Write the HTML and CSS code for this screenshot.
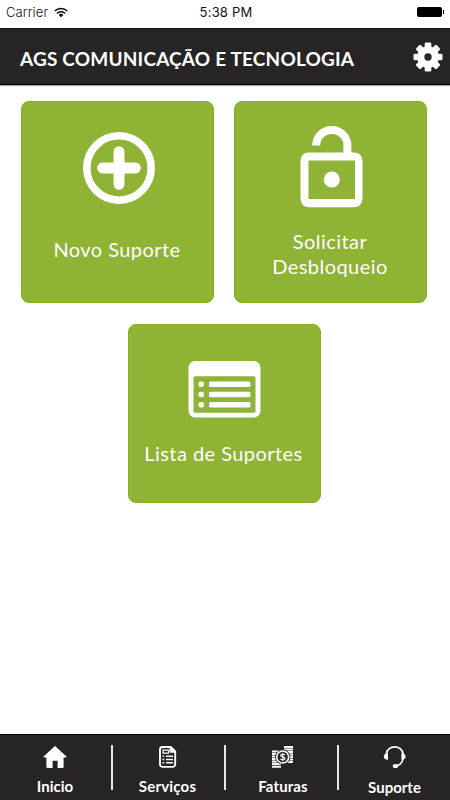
FILE: index.html
```html
<!DOCTYPE html>
<html lang="pt-BR">
<head>
    <meta charset="UTF-8">
    <meta name="viewport" content="width=device-width, initial-scale=1.0">
    <title>AGS Comunicação e Tecnologia</title>
    <link rel="stylesheet" href="styles.css">
</head>
<body>

    <!-- Status bar -->
    <div class="status">
        <div class="carrier">
            <span>Carrier</span>
            <svg width="14" height="11" viewBox="0 0 14 11" fill="none" stroke="#000" stroke-width="1.5">
                <path d="M0.8 4a8.7 8.7 0 0 1 12.4 0M3 6.4a5.6 5.6 0 0 1 8 0"/>
                <path d="M4.7 7.9a3.3 3.3 0 0 1 4.6 0L7 10.3z" fill="#000" stroke="none"/>
            </svg>
        </div>
        <span class="clock">5:38 PM</span>
        <div class="battery"></div>
    </div>

    <header class="header">
        <h1>AGS COMUNICAÇÃO E TECNOLOGIA</h1>
        <svg class="gear" width="30" height="30" viewBox="-15 -15 30 30" fill="#fff">
            <g id="teeth">
                <rect x="-3.3" y="-14.5" width="6.6" height="29" rx="1.3"/>
                <rect x="-14.5" y="-3.3" width="29" height="6.6" rx="1.3"/>
            </g>
            <use href="#teeth" transform="rotate(45)"/>
            <circle r="10.8"/>
            <circle r="3.7" fill="#262424"/>
        </svg>
    </header>

    <main class="cards">
        <div class="card">
            <svg class="icon-plus" width="72" height="72" viewBox="0 0 72 72" fill="none" stroke="#fff">
                <circle cx="36" cy="36" r="32.2" stroke-width="7.5"/>
                <path d="M36 19.7v32.6M19.7 36h32.6" stroke-width="11" stroke-linecap="round"/>
            </svg>
            <span class="label">Novo Suporte</span>
        </div>
        <div class="card">
            <svg class="icon-lock" width="64" height="83" viewBox="0 0 64 83" fill="none" stroke="#fff" stroke-width="8">
                <path d="M16.2 20.5a15.6 15.6 0 0 1 31.2 0V31"/>
                <path d="M8.5 27.5h46a8 8 0 0 1 8 8v38.800a8 8 0 0 1-8 8h-46a8 8 0 0 1-8-8v-38.800a8 8 0 0 1 8-8zM8.500 35.500v38.500h46.500v-38.500z" fill="#fff" fill-rule="evenodd" stroke="none"/>
                <circle cx="31.800" cy="54.500" r="8" fill="#fff" stroke="none"/>
            </svg>
            <span class="label">Solicitar<br>Desbloqueio</span>
        </div>
        <div class="card card-low">
            <svg class="icon-list" width="73" height="58" viewBox="0 0 73 58" fill="#fff">
                <path d="M7 1h59a6.500 6.500 0 0 1 6.500 6.500v43.500a6.500 6.500 0 0 1-6.500 6.500H7a6.500 6.500 0 0 1-6.500-6.500V7.500A6.500 6.500 0 0 1 7 1zM7 16.200a1.500 1.500 0 0 0-1.500 1.500v33.500a1.500 1.500 0 0 0 1.500 1.500h59a1.500 1.500 0 0 0 1.500-1.500V17.700a1.500 1.500 0 0 0-1.500-1.500z" fill-rule="evenodd"/>
                <rect x="10.500" y="21.500" width="5.500" height="5.500" rx="2"/>
                <rect x="10.500" y="31.700" width="5.500" height="5.500" rx="2"/>
                <rect x="10.500" y="42" width="5.500" height="5.500" rx="2"/>
                <rect x="21" y="21.500" width="41.500" height="5.500" rx="1.500"/>
                <rect x="21" y="31.700" width="41.500" height="5.500" rx="1.500"/>
                <rect x="21" y="42" width="41.500" height="5.500" rx="1.500"/>
            </svg>
            <span class="label">Lista de Suportes</span>
        </div>
    </main>

    <nav class="tabs">
        <a class="tab inicio">
            <svg width="24" height="24" viewBox="0 0 24 24" fill="#fff">
                <path d="M12 1L.8 11.300a.8.8 0 0 0 .6 1.300h2v9.300a1 1 0 0 0 1 1h5.200v-7.200h5v7.200h5a1 1 0 0 0 1-1v-9.300h2a.8.8 0 0 0 .6-1.300z"/>
            </svg>
            <span>Inicio</span>
        </a>
        <a class="tab servicos">
            <svg width="24" height="24" viewBox="0 0 24 24" fill="none" stroke="#fff">
                <path d="M6.500 2h8.300l4.400 4.400v13a2.500 2.500 0 0 1-2.500 2.500H6.500A2.500 2.500 0 0 1 4 19.400V4.500A2.500 2.500 0 0 1 6.500 2z" stroke-width="1.900"/>
                <path d="M14 2l5.200 5.200H14z" fill="#fff"/>
                <path d="M7 5.200h5.500v3H7z" stroke-width="1.200"/>
                <path d="M6.500 11.200h1.800M10 11.200h7M6.500 14.500h1.800M10 14.500h7M6.500 17.800h1.800M10 17.800h7" stroke-width="1.600"/>
            </svg>
            <span>Serviços</span>
        </a>
        <a class="tab faturas">
            <svg width="24" height="24" viewBox="0 0 24 24" fill="none" stroke="#fff">
                <path d="M13 2h9M13 4.500h9M13 7h9M13 9.500h9M13 12h9M13 14.500h9M13 17h9M1 6.500h9M1 9h9M1 11.500h9M1 14h9M1 16.500h9M1 19h9M1 21.700h9" stroke-width="1.900"/>
                <circle cx="11.700" cy="12" r="7.200" fill="#262424" stroke="#262424"/>
                <circle cx="11.700" cy="12" r="6" stroke-width="1.600"/>
                <path d="M14 10.100c-.4-1-4.300-1.500-4.300.3 0 1.900 4.300 1.100 4.300 3.100 0 1.900-4.100 1.500-4.600.2M11.800 7.800v8.400" stroke-width="1.100"/>
            </svg>
            <span>Faturas</span>
        </a>
        <a class="tab suporte">
            <svg width="24" height="24" viewBox="0 0 24 24" fill="none" stroke="#fff">
                <path d="M3.200 9C4 4.500 7.500 1.800 11.700 1.800S19.400 4.500 20.200 9" stroke-width="1.700"/>
                <path d="M5 8.200v6.600C2.300 14.800.8 13.500.8 11.500s1.500-3.300 4.200-3.300zM18.400 8.200v6.600c2.700 0 4.200-1.300 4.200-3.300s-1.500-3.300-4.200-3.300z" fill="#fff" stroke="none"/>
                <path d="M20 14c-.7 3.500-3 6-6.500 6.800" stroke-width="1.500"/>
                <ellipse cx="12.500" cy="20.900" rx="2.800" ry="2" fill="#fff" stroke="none"/>
            </svg>
            <span>Suporte</span>
        </a>
    </nav>

</body>
</html>
```
FILE: styles.css
```css
* {
    box-sizing: border-box;
}
body {
    margin: 0;
    height: 800px;
    display: flex;
    flex-direction: column;
    background-color: #fff;
    color: #fff;
    font-family: Lato, "Open Sans", sans-serif;
    overflow: hidden;
}
.status {
    height: 28px;
    padding: 0 6px 4px;
    display: grid;
    grid-template-columns: 1fr auto 1fr;
    align-items: center;
    color: #111;
    font-family: Inter, sans-serif;
    font-size: 13px;
    line-height: 24px;
}
.carrier {
    display: flex;
    align-items: center;
    gap: 6px;
    font-weight: 300;
    letter-spacing: 0.1px;
}
.clock {
    padding-left: 2px;
    letter-spacing: 0.2px;
}
.battery {
    justify-self: end;
    width: 25px;
    height: 10px;
    margin-right: 2px;
    border-radius: 2px;
    background-color: #000;
    position: relative;
}
.battery::after {
    content: "";
    position: absolute;
    right: -2px;
    top: 3px;
    width: 1px;
    height: 4px;
    background-color: #000;
}
.header {
    height: 57px;
    padding: 0 7px 0 20px;
    display: flex;
    align-items: center;
    justify-content: space-between;
    background-color: #262424;
    border-top: 1px solid #111;
    border-bottom: 1px solid #000;
    box-shadow: 0 1px 1px #aaa;
}
h1 {
    margin: 4px 0 0;
    font-size: 19px;
    font-weight: 700;
    line-height: 24px;
    letter-spacing: 0.18px;
    white-space: nowrap;
}
.cards {
    flex: 1;
    margin-right: 2px;
    padding-top: 16px;
    display: flex;
    flex-wrap: wrap;
    align-content: flex-start;
    justify-content: center;
    gap: 21px 20px;
}
.card {
    width: 193px;
    height: 202px;
    display: flex;
    flex-direction: column;
    align-items: center;
    border-radius: 8px;
    background-color: #8fb335;
    border: 1px solid #86b01c;
    font-size: 20px;
    line-height: 25px;
    letter-spacing: 0.45px;
    text-align: center;
    white-space: nowrap;
}
.card-low {
    height: 179px;
}
.label {
    margin-right: 1px;
}
.icon-plus {
    margin: 30px 0 33px 3px;
}
.icon-lock {
    margin: 23px 0 21px 2px;
}
.icon-list {
    margin: 35px 0 23px;
}
.tabs {
    height: 66px;
    display: flex;
    background-color: #262424;
    border-top: 1px solid #000;
}
.tab {
    flex: none;
    width: 113px;
    padding-top: 10px;
    display: flex;
    flex-direction: column;
    align-items: center;
    font-size: 15px;
    font-weight: 700;
    line-height: 20px;
    position: relative;
}
.tab span {
    margin-top: 7px;
}
.tab + .tab::before {
    content: "";
    position: absolute;
    left: -2px;
    top: 10px;
    width: 2px;
    height: 45px;
    background-color: #e8e8e8;
}
.inicio {
    padding-right: 3px;
}
.servicos {
    padding-right: 4px;
    letter-spacing: 0.2px;
}
.faturas {
    padding-left: 1px;
    letter-spacing: 0.1px;
}
.suporte {
    width: 111px;
}
.suporte span {
    margin-top: 8px;
}
```
